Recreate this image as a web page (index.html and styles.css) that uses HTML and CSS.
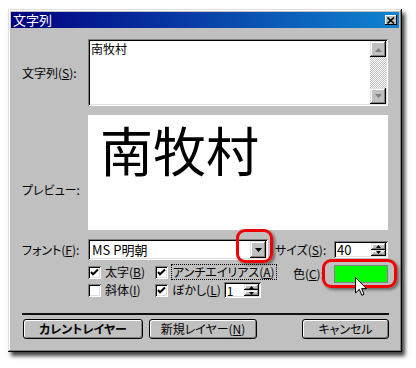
FILE: index.html
```html
<html>
<head>
	<link rel="stylesheet" href="styles.css">
</head>
<body>
<div class="window">
	<div class="titlebar">
		<span class="title">文字列</span>
		<span class="close"><svg width="8" height="7" viewBox="0 0 8 7"><path d="M0.5 0.5 L7 6.5 M7 0.5 L0.5 6.5" stroke="#000" stroke-width="1.6"/></svg></span>
	</div>
	<div class="body">
		<div class="fields">
			<span class="lbl">文字列(<u>S</u>):</span>
			<div class="sunken textarea">
				<div class="ta-text">南牧村</div>
				<div class="vscroll">
					<div class="raised sbtn"><svg width="9" height="5" viewBox="0 0 9 5"><path d="M1 5 L4.5 1 L8 5 Z" fill="#808080"/></svg></div>
					<div class="track"></div>
					<div class="raised sbtn"><svg width="9" height="5" viewBox="0 0 9 5"><path d="M1 0 L4.5 4 L8 0 Z" fill="#808080"/></svg></div>
				</div>
			</div>
			<span class="lbl lbl-preview">プレビュー:</span>
			<div class="preview">南牧村</div>
			<span class="lbl">フォント(<u>F</u>):</span>
			<div class="font-row">
				<div class="sunken combo">
					<span class="combo-text">MS P明朝</span>
					<div class="raised combo-btn"><svg width="7" height="4" viewBox="0 0 7 4"><path d="M0 0 H7 L3.5 4 Z" fill="#000"/></svg></div>
				</div>
				<span class="lbl size-lbl">サイズ(<u>S</u>):</span>
				<div class="sunken spin size-spin">
					<span class="spin-text">40</span>
					<div class="spin-btns">
						<div class="raised"><svg width="5" height="3" viewBox="0 0 5 3"><path d="M0 3 L2.5 0 L5 3 Z" fill="#000"/></svg></div>
						<div class="raised"><svg width="5" height="3" viewBox="0 0 5 3"><path d="M0 0 L2.5 3 L5 0 Z" fill="#000"/></svg></div>
					</div>
				</div>
			</div>
		</div>

		<div class="opts">
			<div class="checks">
				<div class="opt"><span class="check on"></span>太字(<u>B</u>)</div>
				<div class="opt"><span class="check on"></span><span class="focus">アンチエイリアス(<u>A</u>)</span></div>
				<div class="opt"><span class="check"></span>斜体(<u>I</u>)</div>
				<div class="opt"><span class="check on"></span>ぼかし(<u>L</u>)
					<div class="sunken spin blur-spin">
						<span class="spin-text">1</span>
						<div class="spin-btns">
							<div class="raised"><svg width="5" height="3" viewBox="0 0 5 3"><path d="M0 3 L2.5 0 L5 3 Z" fill="#000"/></svg></div>
							<div class="raised"><svg width="5" height="3" viewBox="0 0 5 3"><path d="M0 0 L2.5 3 L5 0 Z" fill="#000"/></svg></div>
						</div>
					</div>
				</div>
			</div>
			<div class="color">
				<span class="lbl">色(<u>C</u>):</span>
				<div class="swatch"></div>
			</div>
		</div>

		<div class="sep"></div>

		<div class="buttons">
			<div class="btn btn-default">カレントレイヤー</div>
			<div class="btn btn-new">新規レイヤー(<u>N</u>)</div>
			<div class="btn btn-cancel">キャンセル</div>
		</div>
	</div>

	<div class="ring ring-combo"></div>
	<div class="ring ring-color"></div>
	<svg class="cursor" width="13" height="20" viewBox="0 0 13 20"><path d="M0.5 0.5 V16 L4.3 12.3 L6.8 18.3 L9 17.3 L6.6 11.6 H11.5 Z" fill="#fff" stroke="#000" stroke-width="1"/></svg>
</div>
</body>
</html>
```

FILE: styles.css
```css
body {
	margin: 0;
	background: #fff;
	font-family: "Noto Sans CJK JP", "Noto Sans", sans-serif;
	font-size: 12px;
	line-height: 14px;
	color: #000;
	font-feature-settings: "palt";
}

u {
	text-underline-offset: 1px;
}

.window {
	position: relative;
	box-sizing: border-box;
	width: 394px;
	height: 343px;
	margin: 9px 0 0 8px;
	padding: 3px;
	background: #c0c0c0;
	box-shadow: inset -1px -1px #000, inset 1px 1px #dfdfdf,
				inset -2px -2px #808080, inset 2px 2px #fff,
				3px 4px 4px rgba(0, 0, 0, 0.75);
}

.titlebar {
	height: 16px;
	display: flex;
	align-items: center;
	justify-content: space-between;
	padding: 0 2px 0 2px;
	background: linear-gradient(to right, #000080, #1084d0);
	color: #fff;
}

.title {
	font-size: 13px;
}

.close {
	width: 12px;
	height: 10px;
	display: flex;
	align-items: center;
	justify-content: center;
	background: #c0c0c0;
	box-shadow: inset -1px -1px #000, inset 1px 1px #fff;
}

.body {
	padding: 11px 10px 10px 11px;
}

.sunken {
	box-sizing: border-box;
	background: #fff;
	box-shadow: inset 1px 1px #808080, inset -1px -1px #fff,
				inset 2px 2px #000, inset -2px -2px #dfdfdf;
}

.raised {
	box-sizing: border-box;
	background: #c0c0c0;
	box-shadow: inset -1px -1px #000, inset 1px 1px #dfdfdf,
				inset -2px -2px #808080, inset 2px 2px #fff;
	display: flex;
	align-items: center;
	justify-content: center;
}

.fields {
	display: grid;
	grid-template-columns: 66px 300px;
	row-gap: 9px;
}

.lbl {
	align-self: center;
	white-space: nowrap;
}

.lbl-preview {
	align-self: start;
	padding-top: 68px;
}

.textarea {
	height: 67px;
	display: flex;
	padding: 2px;
}

.ta-text {
	flex: 1;
	padding: 1px 1px;
}

.vscroll {
	width: 16px;
	display: flex;
	flex-direction: column;
}

.sbtn {
	height: 16px;
}

.track {
	flex: 1;
	background: repeating-conic-gradient(#fff 0 25%, #c0c0c0 0 50%) 0 0 / 2px 2px;
}

.preview {
	box-sizing: border-box;
	height: 115px;
	background: #fff;
	font-size: 53px;
	line-height: 53px;
	padding: 8px 0 0 12px;
	font-feature-settings: normal;
}

.font-row {
	display: flex;
	align-items: center;
	height: 21px;
}

.combo {
	width: 180px;
	height: 21px;
	display: flex;
	align-items: center;
	padding: 2px;
}

.combo-text {
	flex: 1;
	padding-left: 2px;
	font-size: 13px;
}

.combo-btn {
	width: 16px;
	height: 17px;
}

.size-lbl {
	margin-left: 7px;
}

.spin {
	display: flex;
	align-items: stretch;
	padding: 2px;
}

.spin-text {
	flex: 1;
	padding-left: 1px;
	line-height: 13px;
}

.spin-btns {
	width: 15px;
	display: flex;
	flex-direction: column;
}

.spin-btns .raised {
	flex: 1;
}

.size-spin {
	margin-left: auto;
	width: 54px;
	height: 17px;
}

.size-spin .spin-text {
	font-size: 13px;
}

.opts {
	display: flex;
	margin: 3px 0 0 66px;
	height: 36px;
}

.checks {
	display: grid;
	grid-template-columns: 67px auto;
	grid-auto-rows: 18px;
}

.opt {
	display: flex;
	align-items: center;
	white-space: nowrap;
}

.check {
	width: 13px;
	height: 13px;
	margin-right: 4px;
	box-sizing: border-box;
	background: #fff;
	box-shadow: inset 1px 1px #808080, inset -1px -1px #fff,
				inset 2px 2px #000, inset -2px -2px #dfdfdf;
}

.check.on {
	background: #fff url("data:image/svg+xml;utf8,<svg xmlns='http://www.w3.org/2000/svg' width='13' height='13'><path d='M3 6 L5 8.3 L10 3.5' fill='none' stroke='black' stroke-width='2'/></svg>") no-repeat;
}

.focus {
	outline: 1px dotted #000;
	outline-offset: 0;
	padding: 0 1px;
}

.blur-spin {
	width: 37px;
	height: 16px;
	margin-left: 3px;
}

.color {
	margin-left: auto;
	display: flex;
	align-items: center;
	align-self: flex-start;
	margin-top: 2px;
	margin-right: 1px;
}

.swatch {
	width: 54px;
	height: 18px;
	margin-left: 10px;
	box-sizing: border-box;
	background: #00ff00;
	border: 1px solid #808080;
}

.sep {
	height: 2px;
	margin-top: 14px;
	background: #111;
}

.buttons {
	display: flex;
	gap: 6px;
	margin: 4px 0 0 1px;
}

.btn {
	box-sizing: border-box;
	height: 20px;
	display: flex;
	align-items: center;
	justify-content: center;
	border: 1px solid #000;
	border-radius: 3px;
	background: #c0c0c0;
	box-shadow: inset 1px 1px #fff, inset -1px -1px #808080;
}

.btn-default {
	width: 120px;
	font-weight: bold;
}

.btn-new {
	width: 108px;
}

.btn-cancel {
	width: 87px;
	margin-left: auto;
}

.ring {
	position: absolute;
	box-sizing: border-box;
	border: 3px solid #f00000;
	border-radius: 9px;
	box-shadow: 2px 2px 3px rgba(0, 0, 0, 0.45);
}

.ring-combo {
	left: 228px;
	top: 220px;
	width: 37px;
	height: 34px;
}

.ring-color {
	left: 314px;
	top: 250px;
	width: 75px;
	height: 29px;
}

.cursor {
	position: absolute;
	left: 347px;
	top: 268px;
}
```
